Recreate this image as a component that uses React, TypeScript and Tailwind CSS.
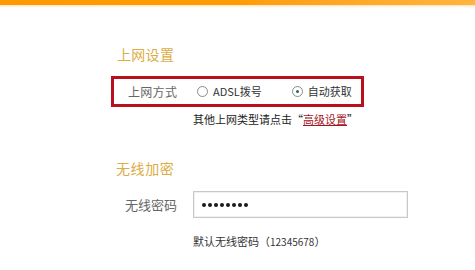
import React from "react";

const cjk = { fontFamily: '"Noto Sans CJK SC", "Noto Sans", sans-serif' };

function Radio({ checked, label }: { checked?: boolean; label: string }) {
  return (
    <label className="flex items-center gap-[5px]">
      <span className="flex h-[11px] w-[11px] items-center justify-center rounded-full border border-[#8a8a8a] bg-white">
        {checked && <span className="h-[3px] w-[3px] rounded-full bg-[#2f6b3a]" />}
      </span>
      <span className="text-[11px] leading-none text-[#333]">{label}</span>
    </label>
  );
}

export default function App() {
  return (
    <div className="h-[270px] w-[475px] overflow-hidden bg-white" style={cjk}>
      {/* top bar */}
      <div className="h-[5px] bg-gradient-to-r from-[#ff9900] via-[#ff9c05] to-[#ffb43c]" />
      <div className="h-[3px] bg-gradient-to-b from-[#fde7bd] to-white" />

      <div className="flex flex-col pt-[36px]">
        <div className="ml-[117px] text-[14px] leading-[20px] tracking-[0.3px] text-[#dcac45]">上网设置</div>

        <div className="ml-[111px] mt-[12px] flex h-[31px] w-[253px] items-center border-[3px] border-[#b8111d] pl-[14px]">
          <span className="w-[69px] text-[12px] tracking-[0.3px] text-[#666]">上网方式</span>
          <Radio label="ADSL拨号" />
          <div className="w-[30px]" />
          <Radio checked label="自动获取" />
        </div>

        <div className="ml-[193px] mt-[4px] text-[11px] leading-[16px] text-[#222]">
          其他上网类型请点击“<a className="text-[#a3161c] underline">高级设置</a>”
        </div>

        <div className="ml-[116px] mt-[31px] text-[14px] leading-[20px] tracking-[0.6px] text-[#dcac45]">无线加密</div>

        <div className="mt-[13px] flex items-center">
          <span className="ml-[125px] w-[68px] text-[13px] text-[#666]">无线密码</span>
          <div className="flex h-[27px] w-[215px] items-center gap-[2px] border border-[#c8c8c8] pl-[8px] shadow-[inset_0_0_0_1px_#f0f0f0]">
            {[0, 1, 2, 3, 4, 5, 6, 7].map((i) => (
              <span key={i} className="h-[4px] w-[4px] rounded-full bg-[#1a1a1a]" />
            ))}
          </div>
        </div>

        <div className="ml-[193px] mt-[15px] text-[11px] leading-[16px] text-[#333]">
          默认无线密码（<span className="text-[10px]">12345678</span>）
        </div>
      </div>
    </div>
  );
}
